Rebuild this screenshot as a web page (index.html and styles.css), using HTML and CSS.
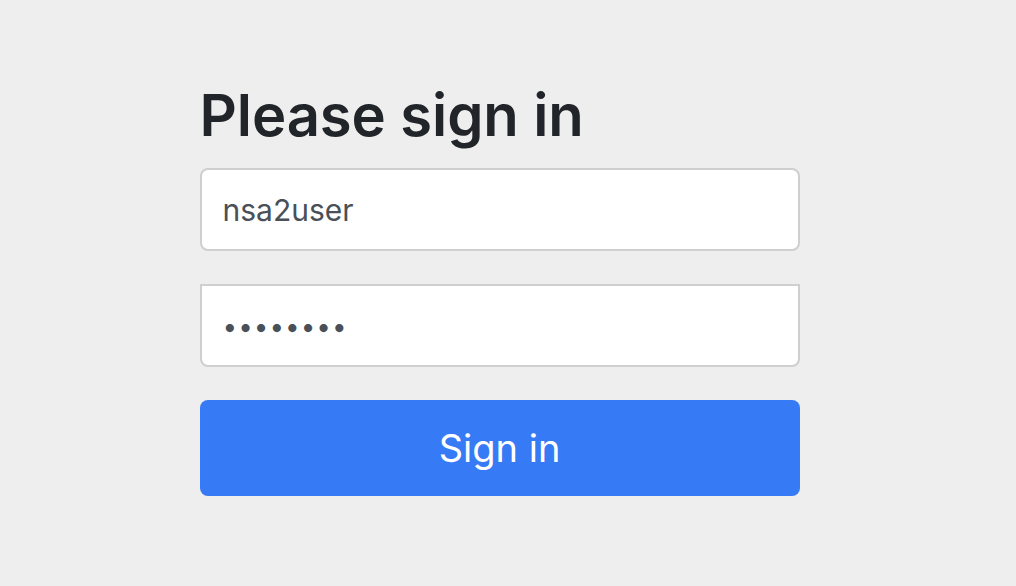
FILE: index.html
```html
<!DOCTYPE html>
<html lang="en">

    <head>
        <meta charset="UTF-8">
        <meta name="viewport" content="width=device-width, initial-scale=1.0">
        <title>Please sign in</title>
        <link rel="stylesheet" href="styles.css">
    </head>

    <body>
        <div class="container">
            <form class="form-signin" method="post" action="/login">
                <h2 class="form-signin-heading">Please sign in</h2>
                <p>
                    <label for="username" class="sr-only">Username</label>
                    <input type="text" id="username" name="username" class="form-control form-top" value="nsa2user">
                </p>
                <p>
                    <label for="password" class="sr-only">Password</label>
                    <input type="password" id="password" name="password" class="form-control form-bottom" value="password">
                </p>
                <button class="btn" type="submit">Sign in</button>
            </form>
        </div>
    </body>

</html>
```

FILE: styles.css
```css
body {
    margin: 0;
    background-color: #eeeeee;
    font-family: Inter, "Noto Sans", sans-serif;
    color: #212529;
}

.container {
    display: flex;
    justify-content: center;
    padding-top: 81px;
}

.form-signin {
    width: 600px;
    margin-left: -17px;
}

.form-signin-heading {
    margin: 0 0 17px 0;
    font-size: 58px;
    font-weight: 600;
    line-height: 1.2;
    letter-spacing: -0.1px;
}

.form-signin p {
    margin: 0 0 33px 0;
}

.sr-only {
    position: absolute;
    width: 1px;
    height: 1px;
    overflow: hidden;
    clip: rect(0, 0, 0, 0);
}

.form-control {
    display: block;
    box-sizing: border-box;
    width: 100%;
    height: 83px;
    padding: 2px 21px 0 21px;
    border: 2px solid #cfcfcf;
    background-color: #fff;
    color: #495057;
    font-family: Inter, "Noto Sans", sans-serif;
    font-size: 30px;
    line-height: normal;
    outline: none;
}

.form-top {
    border-radius: 8px;
}

.form-bottom {
    border-radius: 0 0 8px 8px;
    font-size: 26px;
    letter-spacing: 1px;
}

.btn {
    display: block;
    width: 100%;
    height: 96px;
    border: none;
    border-radius: 8px;
    background-color: #377af5;
    color: #fff;
    font-family: Inter, "Noto Sans", sans-serif;
    font-size: 38px;
}
```
